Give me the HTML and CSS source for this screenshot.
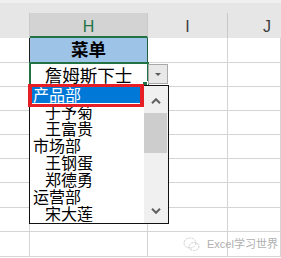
FILE: index.html
```html
<!DOCTYPE html>
<html lang="zh-CN">

<head>
    <meta charset="UTF-8">
    <meta name="viewport" content="width=device-width, initial-scale=1.0">
    <title>菜单</title>
    <link rel="stylesheet" href="styles.css">
</head>

<body>
    <div class="sheet">
        <!-- column headers -->
        <div class="hd"><span class="hd-in"></span></div>
        <div class="hd"><span class="hd-in on">H</span></div>
        <div class="hd"><span class="hd-in">I</span></div>
        <div class="hd"><span class="hd-in last">J</span></div>

        <!-- row 1 -->
        <div class="c"></div>
        <div class="c title">菜单</div>
        <div class="c"></div>
        <div class="c"></div>

        <!-- row 2 -->
        <div class="c"></div>
        <div class="c picked">詹姆斯下士<span class="handle"></span></div>
        <div class="c"></div>
        <div class="c"></div>

        <div class="c"></div><div class="c"></div><div class="c"></div><div class="c"></div>
        <div class="c"></div><div class="c"></div><div class="c"></div><div class="c"></div>
        <div class="c"></div><div class="c"></div><div class="c"></div><div class="c"></div>
        <div class="c"></div><div class="c"></div><div class="c"></div><div class="c"></div>
        <div class="c"></div><div class="c"></div><div class="c"></div><div class="c"></div>
        <div class="c"></div><div class="c"></div><div class="c"></div><div class="c"></div>
        <div class="c"></div><div class="c"></div><div class="c"></div><div class="c"></div>

        <!-- validation dropdown -->
        <div class="drop-btn"><span class="tri"></span></div>

        <div class="dd-list">
            <div class="dd-items">
                <div class="dd-item sel">产品部</div>
                <div class="dd-item sub">于予菊</div>
                <div class="dd-item sub">王富贵</div>
                <div class="dd-item">市场部</div>
                <div class="dd-item sub">王钢蛋</div>
                <div class="dd-item sub">郑德勇</div>
                <div class="dd-item">运营部</div>
                <div class="dd-item sub">宋大莲</div>
            </div>
            <div class="dd-bar">
                <div class="bar-up">
                    <svg width="10" height="6" viewBox="0 0 10 6"><polyline points="1,5.2 5,1.2 9,5.2" /></svg>
                </div>
                <div class="bar-thumb"></div>
                <div class="bar-down">
                    <svg width="10" height="6" viewBox="0 0 10 6"><polyline points="1,0.8 5,4.8 9,0.8" /></svg>
                </div>
            </div>
        </div>

        <div class="mark"></div>
    </div>

    <div class="wm">
        <svg width="17" height="16" viewBox="0 0 17 16">
            <ellipse cx="7" cy="7" rx="6" ry="5" />
            <ellipse cx="11" cy="10.5" rx="5" ry="4" />
        </svg>
        <span>Excel学习世界</span>
    </div>
</body>

</html>
```

FILE: styles.css
```css
body {
    margin: 0;
    width: 281px;
    height: 258px;
    overflow: hidden;
    position: relative;
    background-color: #ffffff;
    font-family: "Noto Sans CJK SC", sans-serif;
}

.sheet {
    position: relative;
    display: grid;
    grid-template-columns: 30px 118px 80px 53px;
    grid-template-rows: 38px 25px 24px 24px 24px 24px 24px 25px 24px 25px;
}

.hd {
    background-color: #e6e6e6;
    border-top: 3px solid #f0f0f0;
    padding-top: 10px;
    box-sizing: border-box;
}

.hd-in {
    display: block;
    height: 25px;
    box-sizing: border-box;
    padding-top: 4px;
    border-right: 1px solid #c9c9c9;
    text-align: center;
    font-family: "Liberation Sans", sans-serif;
    font-size: 16px;
    line-height: 20px;
    color: #3c3c3c;
}

.hd-in.on {
    background-color: #d3d3d3;
    color: #217346;
    border-bottom: 2px solid #217346;
}

/* J column is cut by the window edge, keep its label where Excel puts it */
.hd-in.last {
    text-align: left;
    padding-left: 35px;
    border-right: none;
}

.c {
    border-right: 1px solid #d4d4d4;
    border-bottom: 1px solid #d4d4d4;
    box-sizing: border-box;
}

.title {
    background-color: #9dc3e6;
    border-right-color: #245f40;
    box-shadow: -1px 0 0 #1f1f1f;
    font-size: 17.5px;
    font-weight: bold;
    line-height: 22px;
    text-align: center;
    color: #000000;
}

.picked {
    position: relative;
    outline: 2px solid #217346;
    outline-offset: -1px;
    font-size: 17.5px;
    line-height: 23px;
    text-align: center;
    color: #000000;
}

.handle {
    position: absolute;
    left: 112px;
    top: 18px;
    width: 4px;
    height: 4px;
    background-color: #217346;
    border: 1px solid #ffffff;
}

.drop-btn {
    position: absolute;
    left: 148px;
    top: 64px;
    width: 20px;
    height: 20px;
    box-sizing: border-box;
    border: 1px solid #a8a8a8;
    background-color: #e8e8e8;
    display: flex;
    align-items: center;
    justify-content: center;
}

.tri {
    width: 0;
    height: 0;
    border-left: 3px solid transparent;
    border-right: 3px solid transparent;
    border-top: 3px solid #5a5a5a;
}

.dd-list {
    position: absolute;
    left: 29px;
    top: 85px;
    width: 140px;
    height: 139px;
    box-sizing: border-box;
    border: 1px solid #111111;
    background-color: #ffffff;
    display: flex;
}

.dd-items {
    flex: 1;
}

.dd-item {
    height: 17px;
    line-height: 17px;
    font-size: 16px;
    padding-left: 3px;
    color: #000000;
    white-space: nowrap;
}

.dd-item.sub {
    padding-left: 15px;
}

.dd-item.sel {
    background-color: #0078d7;
    color: #ffffff;
}

.dd-bar {
    width: 24px;
    background-color: #f0f0f0;
    display: flex;
    flex-direction: column;
}

.dd-bar svg polyline {
    fill: none;
    stroke: #606060;
    stroke-width: 2;
}

.bar-up {
    height: 27px;
    box-sizing: border-box;
    padding-top: 12px;
    display: flex;
    justify-content: center;
    align-items: flex-start;
}

.bar-thumb {
    height: 40px;
    margin-right: 1px;
    background-color: #cdcdcd;
}

.bar-down {
    margin-top: auto;
    height: 24px;
    box-sizing: border-box;
    padding-top: 9px;
    display: flex;
    justify-content: center;
    align-items: flex-start;
}

.mark {
    position: absolute;
    left: 28px;
    top: 84px;
    width: 116px;
    height: 23px;
    box-sizing: border-box;
    border: 3px solid #e61e25;
    border-left-width: 4px;
    border-right-width: 4px;
}

.wm {
    position: absolute;
    left: 183px;
    top: 236px;
    display: flex;
    align-items: center;
    gap: 7px;
    color: #b0b0b0;
    font-family: "Liberation Sans", "Noto Sans CJK SC", sans-serif;
    font-size: 11px;
    line-height: 16px;
}

.wm svg ellipse {
    fill: none;
    stroke: #cccccc;
    stroke-width: 1;
    stroke-dasharray: 2 1;
}
```
